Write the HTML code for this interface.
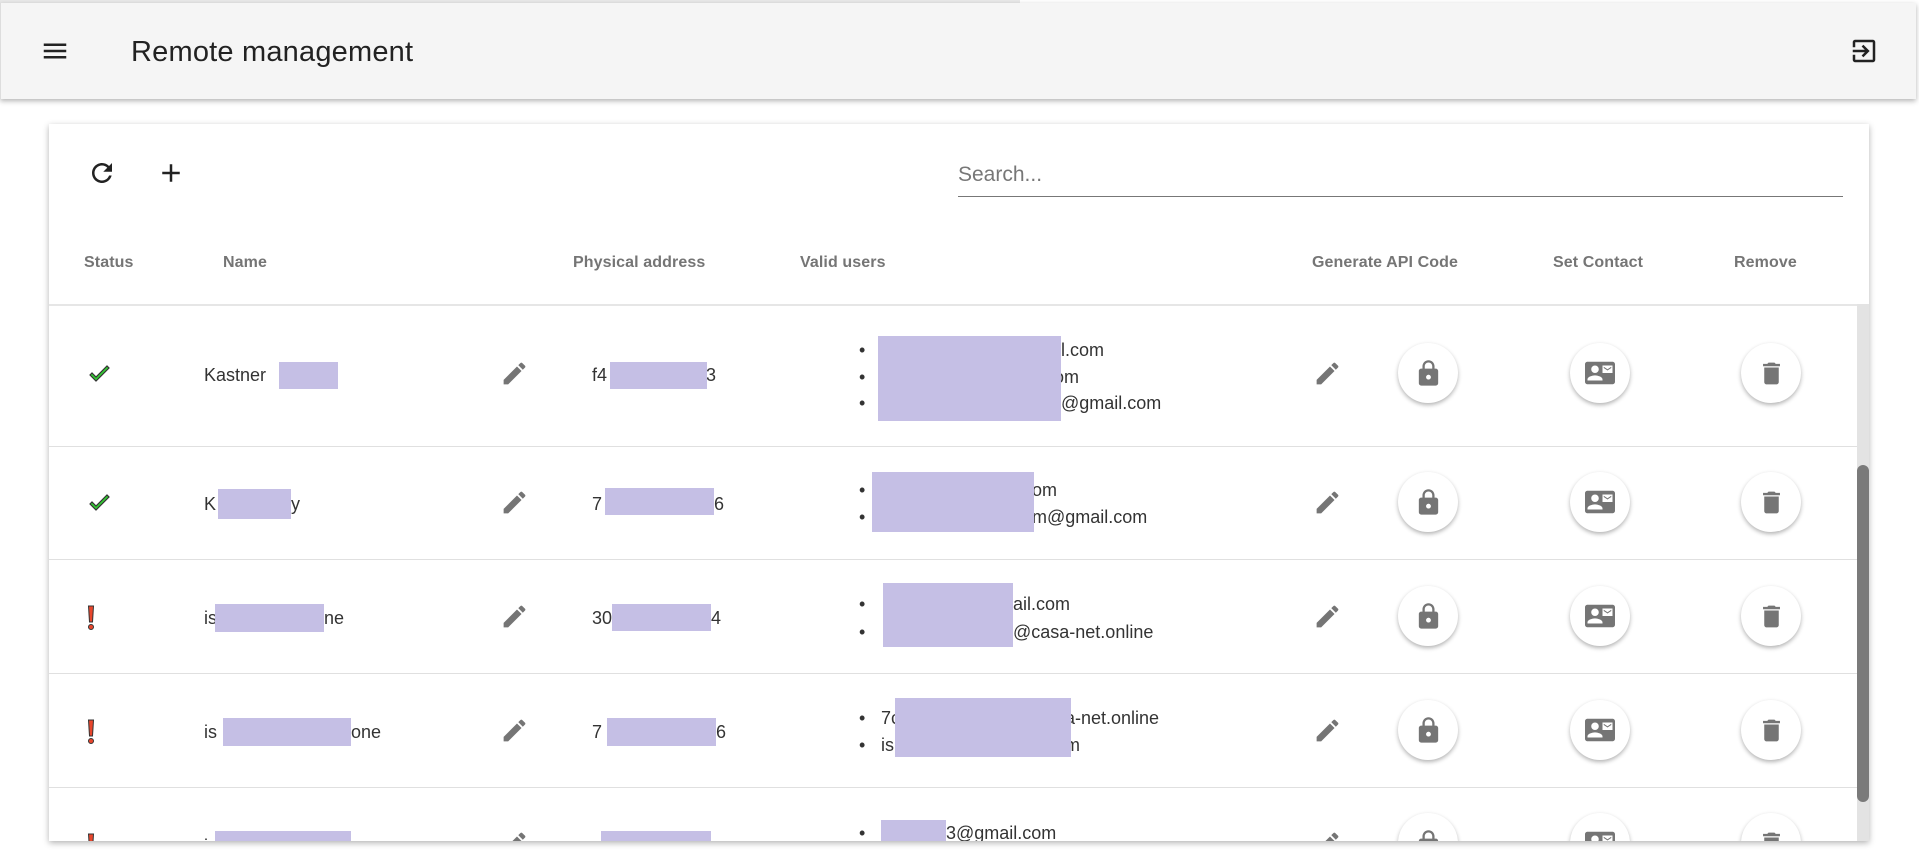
<!DOCTYPE html>
<html><head><meta charset="utf-8"><style>
*{margin:0;padding:0;box-sizing:border-box}
body{width:1919px;height:868px;background:#fff;position:relative;overflow:hidden;font-family:"Liberation Sans",sans-serif;color:#333}
.bar{position:absolute;left:0;top:3px;width:1916px;height:96px;background:#f5f5f5;box-shadow:0 2px 5px rgba(0,0,0,.3);border-left:1px solid #ddd}
.title{position:absolute;left:130px;top:33px;font-size:29px;color:#222;letter-spacing:.2px}
.card{position:absolute;left:49px;top:124px;width:1820px;height:717px;background:#fff;box-shadow:0 2px 6px rgba(0,0,0,.3)}
.abs{position:absolute}
.hd{position:absolute;top:130px;font-size:16px;font-weight:bold;color:#757575;letter-spacing:.1px}
.rows{position:absolute;left:0;top:180px;width:1808px;height:537px;overflow:hidden;border-top:2px solid #e6e6e6}
.line{position:absolute;left:0;width:1808px;height:1px;background:#e0e0e0}
.t{position:absolute;font-size:18px;line-height:22px;white-space:nowrap;color:#333}
.bx{position:absolute;background:#c5bfe5}
.btn{position:absolute;width:60px;height:60px;border-radius:50%;background:#fff;box-shadow:0 2px 4px rgba(0,0,0,.3);display:flex;align-items:center;justify-content:center}
.pen{position:absolute;width:29px;height:29px;fill:#757575}
</style></head><body>
<svg style="position:absolute;width:0;height:0"><defs>
<symbol id="pen" viewBox="0 0 24 24"><path d="M3 17.25V21h3.75L17.81 9.94l-3.75-3.75L3 17.25zM20.71 7.04c.39-.39.39-1.02 0-1.41l-2.34-2.34c-.39-.39-1.02-.39-1.41 0l-1.83 1.83 3.75 3.75 1.83-1.83z"/></symbol>
<symbol id="lock" viewBox="0 0 24 24"><path d="M18 8h-1V6c0-2.76-2.24-5-5-5S7 3.24 7 6v2H6c-1.1 0-2 .9-2 2v10c0 1.1.9 2 2 2h12c1.1 0 2-.9 2-2V10c0-1.1-.9-2-2-2zm-6 9c-1.1 0-2-.9-2-2s.9-2 2-2 2 .9 2 2-.9 2-2 2zm3.1-9H8.9V6c0-1.71 1.39-3.1 3.1-3.1 1.71 0 3.1 1.39 3.1 3.1v2z"/></symbol>
<symbol id="cm" viewBox="0 0 24 24"><path d="M21 8V7l-3 2-3-2v1l3 2 3-2zm1-5H2C.9 3 0 3.9 0 5v14c0 1.1.9 2 2 2h20c1.1 0 1.99-.9 1.99-2L24 5c0-1.1-.9-2-2-2zM8 6c1.66 0 3 1.34 3 3s-1.34 3-3 3-3-1.34-3-3 1.34-3 3-3zm6 12H2v-1c0-2 4-3.1 6-3.1s6 1.1 6 3.1v1zm8-6h-8V6h8v6z"/></symbol>
<symbol id="del" viewBox="0 0 24 24"><path d="M6 19c0 1.1.9 2 2 2h8c1.1 0 2-.9 2-2V7H6v12zM19 4h-3.5l-1-1h-5l-1 1H5v2h14V4z"/></symbol>
</defs></svg>
<div style="position:absolute;left:0;top:0;width:1020px;height:3px;background:#e8e8e8"></div>
<div class="bar">
<svg class="abs" style="left:39px;top:33px" width="30" height="30" viewBox="0 0 24 24" fill="#222"><path d="M3 18h18v-2H3v2zm0-5h18v-2H3v2zm0-7v2h18V6H3z"/></svg>
<div class="title">Remote management</div>
<svg class="abs" style="left:1848px;top:33px" width="30" height="30" viewBox="0 0 24 24" fill="#222"><path d="M10.09 15.59L11.5 17l5-5-5-5-1.41 1.41L12.67 11H3v2h9.67l-2.58 2.59zM19 3H5c-1.11 0-2 .9-2 2v4h2V5h14v14H5v-4H3v4c0 1.1.89 2 2 2h14c1.1 0 2-.9 2-2V5c0-1.1-.9-2-2-2z"/></svg>
</div>
<div class="card">
<svg class="abs" style="left:38px;top:34px" width="30" height="30" viewBox="0 0 24 24" fill="#222"><path d="M17.65 6.35C16.2 4.9 14.21 4 12 4c-4.42 0-7.99 3.58-7.99 8s3.57 8 7.99 8c3.73 0 6.84-2.55 7.73-6h-2.08c-.82 2.33-3.04 4-5.65 4-3.31 0-6-2.69-6-6s2.69-6 6-6c1.66 0 3.14.69 4.22 1.78L13 11h7V4l-2.35 2.35z"/></svg>
<svg class="abs" style="left:107px;top:34px" width="30" height="30" viewBox="0 0 24 24" fill="#222"><path d="M19 13h-6v6h-2v-6H5v-2h6V5h2v6h6v2z"/></svg>
<div class="abs" style="left:909px;top:39px;font-size:21px;color:#777">Search...</div>
<div class="abs" style="left:909px;top:72px;width:885px;height:1px;background:#777"></div>
<div class="hd" style="left:35px">Status</div>
<div class="hd" style="left:174px">Name</div>
<div class="hd" style="left:524px">Physical address</div>
<div class="hd" style="left:751px">Valid users</div>
<div class="hd" style="left:1263px">Generate API Code</div>
<div class="hd" style="left:1504px">Set Contact</div>
<div class="hd" style="left:1685px">Remove</div>
<div class="abs" style="left:1808px;top:180px;width:12px;height:537px;background:#e3e3e3"></div>
<div class="abs" style="left:1808px;top:341px;width:12px;height:337px;background:#7a7a7a;border-radius:6px"></div>
<div class="rows">
<div class="line" style="top:140px"></div><div class="line" style="top:253px"></div><div class="line" style="top:367px"></div><div class="line" style="top:481px"></div>

<svg class="abs" style="left:39px;top:59px" width="24" height="20" viewBox="0 0 24 20"><path d="M2 10l6 6L21 3l-2-2L8 12 4 8z" fill="#3c3" stroke="#333" stroke-width="1.2"/></svg>
<svg class="abs" style="left:39px;top:188px" width="24" height="20" viewBox="0 0 24 20"><path d="M2 10l6 6L21 3l-2-2L8 12 4 8z" fill="#3c3" stroke="#333" stroke-width="1.2"/></svg>
<svg class="abs" style="left:37px;top:299px" width="10" height="26" viewBox="0 0 10 26"><path d="M2.5 1h5l-1 16h-3z" fill="#e8462c" stroke="#333" stroke-width="1"/><circle cx="5" cy="22" r="2.5" fill="#e8462c" stroke="#333" stroke-width="1"/></svg>
<svg class="abs" style="left:37px;top:413px" width="10" height="26" viewBox="0 0 10 26"><path d="M2.5 1h5l-1 16h-3z" fill="#e8462c" stroke="#333" stroke-width="1"/><circle cx="5" cy="22" r="2.5" fill="#e8462c" stroke="#333" stroke-width="1"/></svg>
<svg class="abs" style="left:37px;top:527px" width="10" height="26" viewBox="0 0 10 26"><path d="M2.5 1h5l-1 16h-3z" fill="#e8462c" stroke="#333" stroke-width="1"/><circle cx="5" cy="22" r="2.5" fill="#e8462c" stroke="#333" stroke-width="1"/></svg>

<div class="t" style="left:155px;top:58px">Kastner</div><div class="bx" style="left:230px;top:56px;width:59px;height:27px"></div>
<div class="t" style="left:543px;top:58px">f4</div><div class="t" style="left:657px;top:58px">3</div><div class="bx" style="left:561px;top:56px;width:97px;height:27px"></div>
<div class="t" style="left:810px;top:33px">•</div><div class="t" style="left:810px;top:60px">•</div><div class="t" style="left:810px;top:86px">•</div>
<div class="t" style="left:1012px;top:33px">l.com</div><div class="t" style="left:1005px;top:60px">om</div><div class="t" style="left:1012px;top:86px">@gmail.com</div>
<div class="bx" style="left:829px;top:30px;width:183px;height:85px"></div>

<div class="t" style="left:155px;top:187px">K</div><div class="t" style="left:242px;top:187px">y</div><div class="bx" style="left:169px;top:183px;width:73px;height:30px"></div>
<div class="t" style="left:543px;top:187px">7</div><div class="t" style="left:665px;top:187px">6</div><div class="bx" style="left:556px;top:182px;width:109px;height:27px"></div>
<div class="t" style="left:810px;top:173px">•</div><div class="t" style="left:810px;top:200px">•</div>
<div class="t" style="left:983px;top:173px">om</div><div class="t" style="left:983px;top:200px">m@gmail.com</div>
<div class="bx" style="left:823px;top:166px;width:162px;height:60px"></div>

<div class="t" style="left:155px;top:301px">is</div><div class="t" style="left:275px;top:301px">ne</div><div class="bx" style="left:166px;top:298px;width:109px;height:28px"></div>
<div class="t" style="left:543px;top:301px">30</div><div class="t" style="left:662px;top:301px">4</div><div class="bx" style="left:563px;top:298px;width:99px;height:27px"></div>
<div class="t" style="left:810px;top:287px">•</div><div class="t" style="left:810px;top:315px">•</div>
<div class="t" style="left:964px;top:287px">ail.com</div><div class="t" style="left:964px;top:315px">@casa-net.online</div>
<div class="bx" style="left:834px;top:277px;width:130px;height:64px"></div>

<div class="t" style="left:155px;top:415px">is</div><div class="t" style="left:302px;top:415px">one</div><div class="bx" style="left:174px;top:412px;width:128px;height:28px"></div>
<div class="t" style="left:543px;top:415px">7</div><div class="t" style="left:667px;top:415px">6</div><div class="bx" style="left:558px;top:412px;width:109px;height:28px"></div>
<div class="t" style="left:810px;top:401px">•</div><div class="t" style="left:810px;top:428px">•</div>
<div class="t" style="left:832px;top:401px">7c</div><div class="t" style="left:1016px;top:401px">a-net.online</div>
<div class="t" style="left:832px;top:428px">is</div><div class="t" style="left:1016px;top:428px">m</div>
<div class="bx" style="left:846px;top:392px;width:176px;height:59px"></div>

<div class="t" style="left:155px;top:529px">is</div><div class="bx" style="left:166px;top:525px;width:136px;height:28px"></div>
<div class="t" style="left:543px;top:529px">c</div><div class="bx" style="left:552px;top:525px;width:110px;height:28px"></div>
<div class="t" style="left:810px;top:516px">•</div><div class="t" style="left:897px;top:516px">3@gmail.com</div>
<div class="bx" style="left:832px;top:514px;width:65px;height:30px"></div>
</div>
</div>
<div style="position:absolute;left:49px;top:306px;width:1808px;height:535px;overflow:hidden">
<svg class="pen" style="left:451px;top:53px"><use href="#pen"/></svg>
<svg class="pen" style="left:451px;top:182px"><use href="#pen"/></svg>
<svg class="pen" style="left:451px;top:296px"><use href="#pen"/></svg>
<svg class="pen" style="left:451px;top:410px"><use href="#pen"/></svg>
<svg class="pen" style="left:451px;top:523px"><use href="#pen"/></svg>
<svg class="pen" style="left:1264px;top:53px"><use href="#pen"/></svg>
<svg class="pen" style="left:1264px;top:182px"><use href="#pen"/></svg>
<svg class="pen" style="left:1264px;top:296px"><use href="#pen"/></svg>
<svg class="pen" style="left:1264px;top:410px"><use href="#pen"/></svg>
<svg class="pen" style="left:1264px;top:523px"><use href="#pen"/></svg>

<div class="btn" style="left:1349px;top:37px"><svg width="29" height="29" fill="#757575"><use href="#lock"/></svg></div>
<div class="btn" style="left:1521px;top:37px"><svg width="30" height="30" fill="#757575"><use href="#cm"/></svg></div>
<div class="btn" style="left:1692px;top:37px"><svg width="29" height="29" fill="#757575"><use href="#del"/></svg></div>
<div class="btn" style="left:1349px;top:166px"><svg width="29" height="29" fill="#757575"><use href="#lock"/></svg></div>
<div class="btn" style="left:1521px;top:166px"><svg width="30" height="30" fill="#757575"><use href="#cm"/></svg></div>
<div class="btn" style="left:1692px;top:166px"><svg width="29" height="29" fill="#757575"><use href="#del"/></svg></div>
<div class="btn" style="left:1349px;top:280px"><svg width="29" height="29" fill="#757575"><use href="#lock"/></svg></div>
<div class="btn" style="left:1521px;top:280px"><svg width="30" height="30" fill="#757575"><use href="#cm"/></svg></div>
<div class="btn" style="left:1692px;top:280px"><svg width="29" height="29" fill="#757575"><use href="#del"/></svg></div>
<div class="btn" style="left:1349px;top:394px"><svg width="29" height="29" fill="#757575"><use href="#lock"/></svg></div>
<div class="btn" style="left:1521px;top:394px"><svg width="30" height="30" fill="#757575"><use href="#cm"/></svg></div>
<div class="btn" style="left:1692px;top:394px"><svg width="29" height="29" fill="#757575"><use href="#del"/></svg></div>
<div class="btn" style="left:1349px;top:507px"><svg width="29" height="29" fill="#757575"><use href="#lock"/></svg></div>
<div class="btn" style="left:1521px;top:507px"><svg width="30" height="30" fill="#757575"><use href="#cm"/></svg></div>
<div class="btn" style="left:1692px;top:507px"><svg width="29" height="29" fill="#757575"><use href="#del"/></svg></div>
</div>
</body></html>
